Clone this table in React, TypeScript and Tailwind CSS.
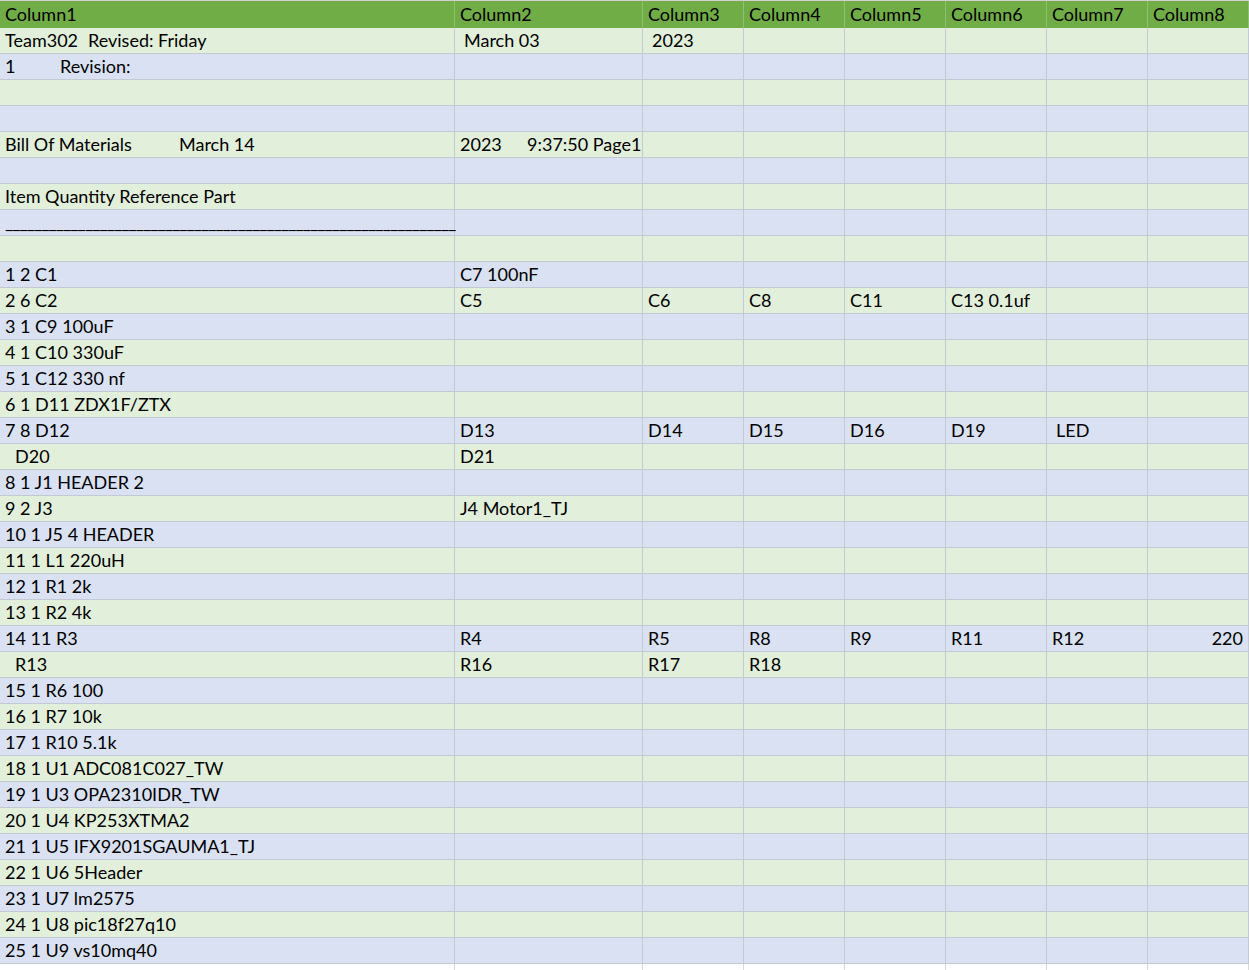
import React from "react";

type Cell = string | { t: React.ReactNode; cls?: string } | null;

const rows: Cell[][] = [
  [
    { t: <><span className="inline-block w-[83px]">Team302</span>Revised: Friday</> },
    { t: "March 03", cls: "pl-[9px]" },
    { t: "2023", cls: "pl-[9px]" },
  ],
  [{ t: <><span className="inline-block w-[55px]">1</span>Revision:</> }],
  [],
  [],
  [
    { t: <><span className="inline-block w-[174px]">Bill Of Materials</span>March 14</> },
    { t: <><span className="inline-block w-[67px]">2023</span>9:37:50 Page1</> },
  ],
  [],
  ["Item Quantity Reference Part"],
  [{ t: <span className="tracking-[-1px]">{"_".repeat(62)}</span> }],
  [],
  ["1 2 C1", "C7 100nF"],
  ["2 6 C2", "C5", "C6", "C8", "C11", "C13 0.1uf"],
  ["3 1 C9 100uF"],
  ["4 1 C10 330uF"],
  ["5 1 C12 330 nf"],
  ["6 1 D11 ZDX1F/ZTX"],
  ["7 8 D12", "D13", "D14", "D15", "D16", "D19", { t: "LED", cls: "pl-[9px]" }],
  [{ t: "D20", cls: "pl-[15px]" }, "D21"],
  ["8 1 J1 HEADER 2"],
  ["9 2 J3", "J4 Motor1_TJ"],
  ["10 1 J5 4 HEADER"],
  ["11 1 L1 220uH"],
  ["12 1 R1 2k"],
  ["13 1 R2 4k"],
  ["14 11 R3", "R4", "R5", "R8", "R9", "R11", "R12", { t: "220", cls: "justify-end pr-[5px]" }],
  [{ t: "R13", cls: "pl-[15px]" }, "R16", "R17", "R18"],
  ["15 1 R6 100"],
  ["16 1 R7 10k"],
  ["17 1 R10 5.1k"],
  ["18 1 U1 ADC081C027_TW"],
  ["19 1 U3 OPA2310IDR_TW"],
  ["20 1 U4 KP253XTMA2"],
  ["21 1 U5 IFX9201SGAUMA1_TJ"],
  ["22 1 U6 5Header"],
  ["23 1 U7 lm2575"],
  ["24 1 U8 pic18f27q10"],
  ["25 1 U9 vs10mq40"],
];

const headers = ["Column1", "Column2", "Column3", "Column4", "Column5", "Column6", "Column7", "Column8"];

export default function App() {
  return (
    <div
      className="w-[1249px] h-[970px] overflow-hidden bg-white text-black text-[18px] leading-none"
      style={{ fontFamily: "Lato, 'Open Sans', sans-serif" }}
    >
      <div className="border-t border-[#d0d0d0]">
        <div className="grid grid-cols-[455px_188px_101px_101px_101px_101px_101px_101px] bg-[#70ad47]">
          {headers.map((h) => (
            <div
              key={h}
              className="h-[27px] flex items-end pb-[5px] pl-[5px] border-r border-[#8fbf73] whitespace-nowrap"
            >
              {h}
            </div>
          ))}
        </div>
        {rows.map((r, i) => (
          <div
            key={i}
            className={`grid grid-cols-[455px_188px_101px_101px_101px_101px_101px_101px] ${
              i % 2 === 0 ? "bg-[#e2efda]" : "bg-[#d9e1f2]"
            }`}
          >
            {Array.from({ length: 8 }).map((_, c) => {
              const cell = r[c];
              let content: React.ReactNode = null;
              let cls = "pl-[5px]";
              if (typeof cell === "string") content = cell;
              else if (cell && typeof cell === "object") {
                content = cell.t;
                if (cell.cls) cls = cell.cls;
              }
              return (
                <div
                  key={c}
                  className={`h-[26px] flex items-end pb-[4px] border-r border-b border-[#c3cad3] whitespace-nowrap overflow-visible relative ${cls}`}
                >
                  {content}
                </div>
              );
            })}
          </div>
        ))}
        <div className="grid grid-cols-[455px_188px_101px_101px_101px_101px_101px_101px] h-[20px]">
          {Array.from({ length: 8 }).map((_, c) => (
            <div key={c} className="border-r border-[#d9d9d9]" />
          ))}
        </div>
      </div>
    </div>
  );
}
